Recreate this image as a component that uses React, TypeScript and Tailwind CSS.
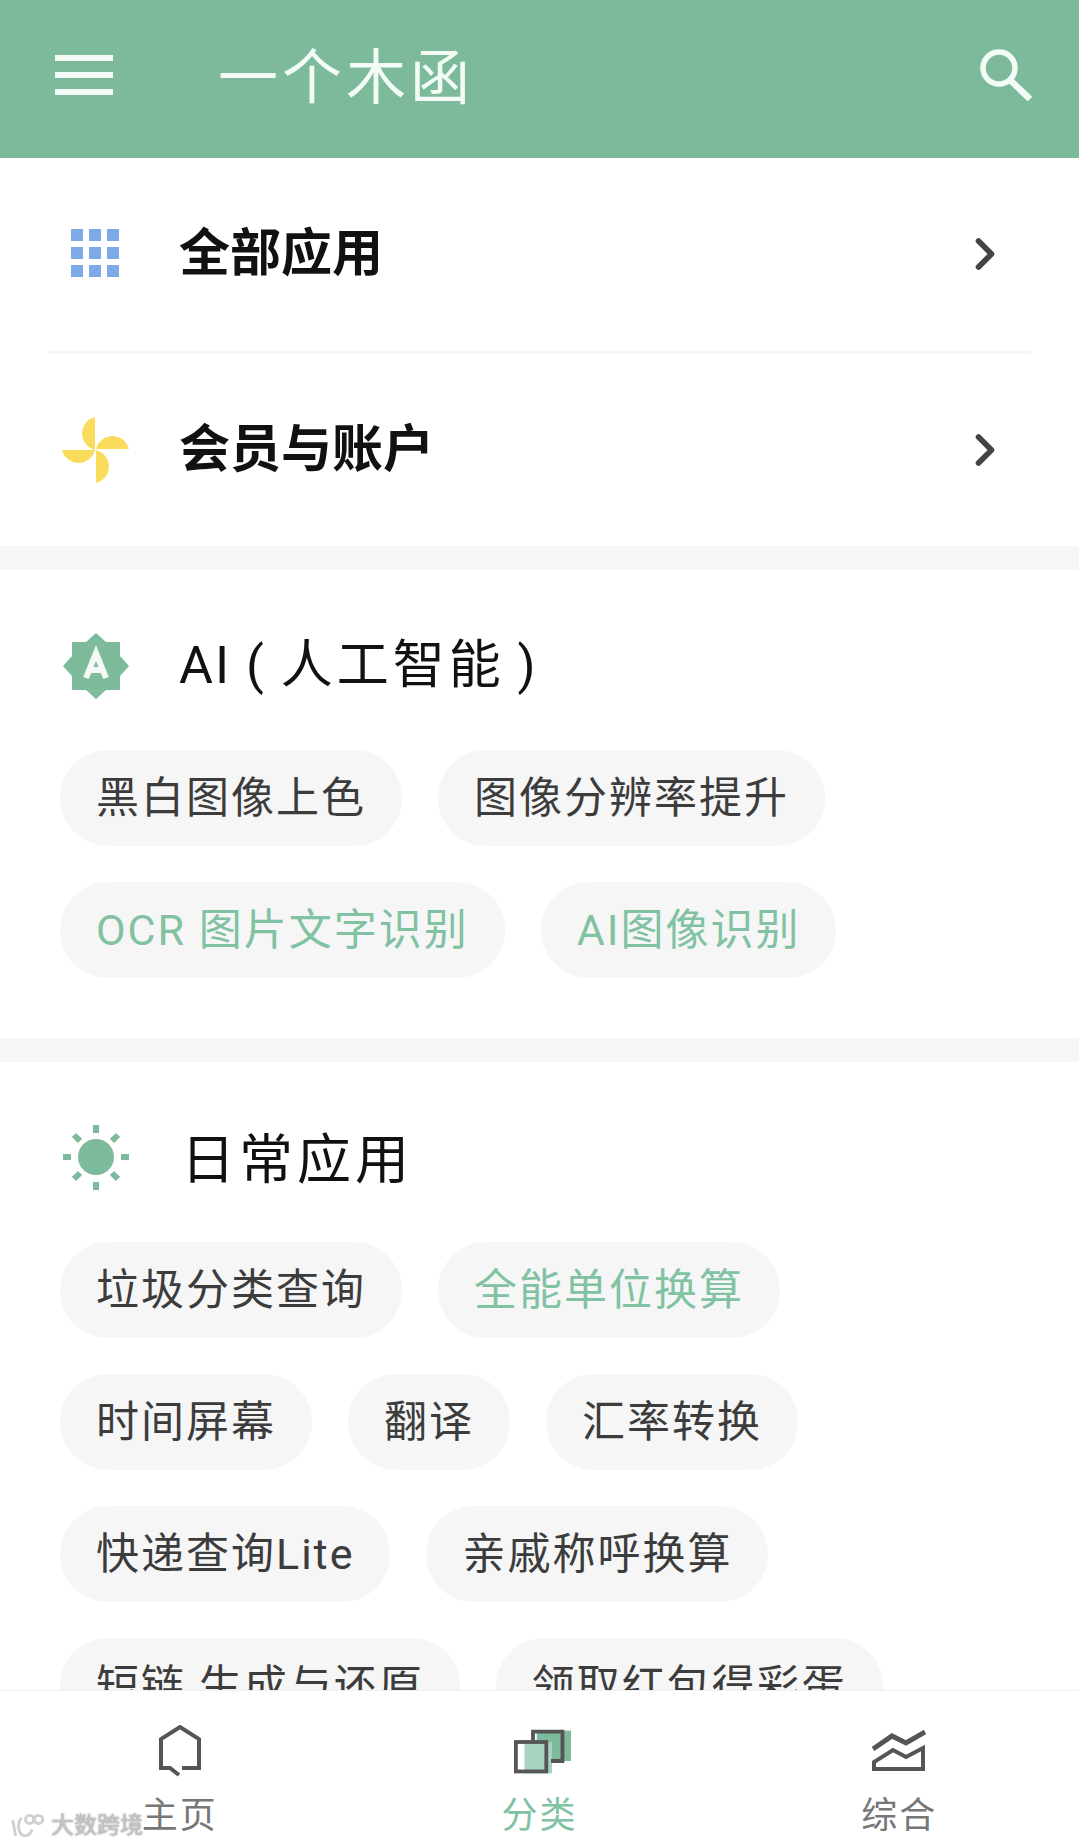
import { ChevronRight } from 'lucide-react';
import type { ReactNode } from 'react';

const font = { fontFamily: 'Roboto, "Noto Sans CJK SC", sans-serif' };

function Chip({ label, green }: { label: string; green?: boolean }) {
  return (
    <div
      className={`h-[96px] px-[36px] rounded-[48px] bg-[#f6f6f6] flex items-center text-[43px] tracking-[2px] whitespace-nowrap ${
        green ? 'text-[#80c2a2]' : 'text-[#3c3c3c]'
      }`}
    >
      {label}
    </div>
  );
}

function MenuIcon() {
  return (
    <svg width="58" height="40" viewBox="0 0 58 40" fill="#f2fbf6" className="shrink-0">
      <rect y="0" width="58" height="6" />
      <rect y="17" width="58" height="6" />
      <rect y="34" width="58" height="6" />
    </svg>
  );
}

function SearchIcon() {
  return (
    <svg width="52" height="52" viewBox="0 0 52 52" fill="none" stroke="#f2fbf6" className="shrink-0">
      <circle cx="19" cy="19" r="16" strokeWidth="5.5" />
      <path d="M30 31 50 50" strokeWidth="6.5" />
    </svg>
  );
}

function AppsIcon() {
  return (
    <svg width="50" height="50" viewBox="0 0 50 50" fill="#7eaae8">
      {[0, 18, 36].flatMap((y) =>
        [0, 18, 36].map((x) => <rect key={`${x}-${y}`} x={x} y={y} width="12" height="12" />),
      )}
    </svg>
  );
}

function PinwheelIcon() {
  return (
    <svg width="68" height="68" viewBox="0 0 68 68" fill="#f9dc5c">
      <path d="M33 34V1a17 17 0 0 0 0 33Z" />
      <path d="M34 33h33a17 17 0 0 0-33 0Z" />
      <path d="M34 34v33a17 17 0 0 0 0-33Z" />
      <path d="M33 34H0a17 17 0 0 0 33 0Z" />
    </svg>
  );
}

function BadgeIcon() {
  return (
    <svg width="68" height="68" viewBox="0 0 68 68">
      <path
        fill="#7dbb9c"
        d="M34 1 44 10H58V24L67 34 58 44V58H44L34 67 24 58H10V44L1 34 10 24V10H24Z"
      />
      <path fill="none" stroke="#f4fbf7" strokeWidth="6" d="M24 46 34 21 44 46M28 38H40" />
    </svg>
  );
}

function SunIcon() {
  return (
    <svg width="68" height="68" viewBox="0 0 68 68">
      <circle cx="34" cy="33" r="18" fill="#7dbb9c" />
      <path
        stroke="#7dbb9c"
        strokeWidth="6"
        d="M34 1v8M34 58v8M1 33h8M59 33h8M12 11l6 6M50 49l6 6M56 11l-6 6M18 49l-6 6"
      />
    </svg>
  );
}

function HomeIcon() {
  return (
    <svg width="44" height="52" viewBox="0 0 44 52" fill="none" stroke="#555" strokeWidth="4">
      <path d="M24 43H41V14L22 2 3 14V43H12L21 50" />
    </svg>
  );
}

function CategoryIcon() {
  return (
    <svg width="57" height="45" viewBox="0 0 60 46" fill="none" className="ml-[6px]">
      <rect x="24" y="1" width="36" height="32" fill="#7dbb9c" />
      <rect x="11" y="13" width="29" height="33" fill="#a6d3bd" />
      <path stroke="#555" strokeWidth="4" d="M20 12V2H51V33H39" />
      <rect x="2" y="13" width="32" height="31" stroke="#555" strokeWidth="4" />
    </svg>
  );
}

function ChartIcon() {
  return (
    <svg width="54" height="42" viewBox="0 0 54 42" fill="none" stroke="#555" strokeWidth="4">
      <path d="M1 19 20 6 34 13 53 2" strokeWidth="5" />
      <path d="M2 39V32L21 20 34 27 51 18V39Z" />
    </svg>
  );
}

function Section({ icon, title, children }: { icon: ReactNode; title: ReactNode; children: ReactNode }) {
  return (
    <section className="bg-white px-[60px] pt-[62px] pb-[60px]">
      <div className="flex items-center h-[68px]">
        <div className="ml-[2px] w-[68px] flex justify-center">{icon}</div>
        {title}
      </div>
      <div className="mt-[50px] flex flex-col gap-[36px]">{children}</div>
    </section>
  );
}

function ChipRow({ children }: { children: ReactNode }) {
  return <div className="flex gap-[36px]">{children}</div>;
}

function LinkRow({ icon, label }: { icon: ReactNode; label: string }) {
  return (
    <div className="flex-1 flex items-center pl-[14px] pr-[20px]">
      <div className="w-[68px] flex justify-center">{icon}</div>
      <span className="ml-[49px] flex-1 text-[51px] font-bold text-[#111111]">{label}</span>
      <ChevronRight size={52} strokeWidth={2.6} className="text-[#444444]" />
    </div>
  );
}

function NavItem({ icon, label, green }: { icon: ReactNode; label: string; green?: boolean }) {
  return (
    <div className="flex-1 flex flex-col items-center">
      <div className="h-[60px] flex items-center justify-center">{icon}</div>
      <span className={`mt-[12px] text-[36px] leading-[46px] tracking-[2px] ${green ? 'text-[#80c2a2]' : 'text-[#777777]'}`}>
        {label}
      </span>
    </div>
  );
}

export default function App() {
  return (
    <div className="relative w-[1079px] h-[1847px] overflow-hidden bg-white flex flex-col" style={font}>
      <header className="h-[158px] shrink-0 bg-[#7cba9b] flex items-center pl-[55px] pr-[47px] pb-[9px] text-[#f2fbf6]">
        <MenuIcon />
        <h1 className="ml-[105px] flex-1 text-[60px] tracking-[4px] mt-[9px]">一个木函</h1>
        <SearchIcon />
      </header>

      <main className="flex-1 min-h-0 overflow-hidden">
        <div className="mx-[48px] h-[388px] flex flex-col">
          <LinkRow icon={<AppsIcon />} label="全部应用" />
          <div className="h-[3px] bg-[#f6f6f6]" />
          <LinkRow icon={<PinwheelIcon />} label="会员与账户" />
        </div>

        <div className="h-[24px] bg-[#f6f6f6]" />

        <Section
          icon={<BadgeIcon />}
          title={
            <h2 className="ml-[49px] text-[#111111] text-[52px] whitespace-nowrap">
              <span className="tracking-[2px]">AI ( </span>
              <span className="tracking-[4px]">人工智能</span>
              <span> )</span>
            </h2>
          }
        >
          <ChipRow>
            <Chip label="黑白图像上色" />
            <Chip label="图像分辨率提升" />
          </ChipRow>
          <ChipRow>
            <Chip label="OCR 图片文字识别" green />
            <Chip label="AI图像识别" green />
          </ChipRow>
        </Section>

        <div className="h-[24px] bg-[#f6f6f6]" />

        <Section
          icon={<SunIcon />}
          title={
            <h2 className="ml-[51px] pt-[4px] text-[#111111] text-[54px] tracking-[4px] whitespace-nowrap">日常应用</h2>
          }
        >
          <ChipRow>
            <Chip label="垃圾分类查询" />
            <Chip label="全能单位换算" green />
          </ChipRow>
          <ChipRow>
            <Chip label="时间屏幕" />
            <Chip label="翻译" />
            <Chip label="汇率转换" />
          </ChipRow>
          <ChipRow>
            <Chip label="快递查询Lite" />
            <Chip label="亲戚称呼换算" />
          </ChipRow>
          <ChipRow>
            <Chip label="短链 生成与还原" />
            <Chip label="领取红包得彩蛋" />
          </ChipRow>
        </Section>
      </main>

      <nav className="h-[157px] shrink-0 bg-white border-t border-[#f0f0f0] flex pt-[30px]">
        <NavItem icon={<HomeIcon />} label="主页" />
        <NavItem icon={<CategoryIcon />} label="分类" green />
        <NavItem icon={<ChartIcon />} label="综合" />
      </nav>

      <div className="absolute left-[10px] bottom-[4px] flex items-center gap-[5px] text-[23px] text-[#c4c4c4] [text-shadow:0_0_2px_#888]">
        <svg width="36" height="30" viewBox="0 0 44 30" fill="none" stroke="#cfcfcf" strokeWidth="3.5">
          <path d="M3 8c3 8 2 14 4 19M14 5C8 12 10 26 18 27c5 0 8-4 9-8" />
          <circle cx="24" cy="7" r="5" />
          <circle cx="35" cy="7" r="5" />
        </svg>
        <span>大数跨境</span>
      </div>
    </div>
  );
}
